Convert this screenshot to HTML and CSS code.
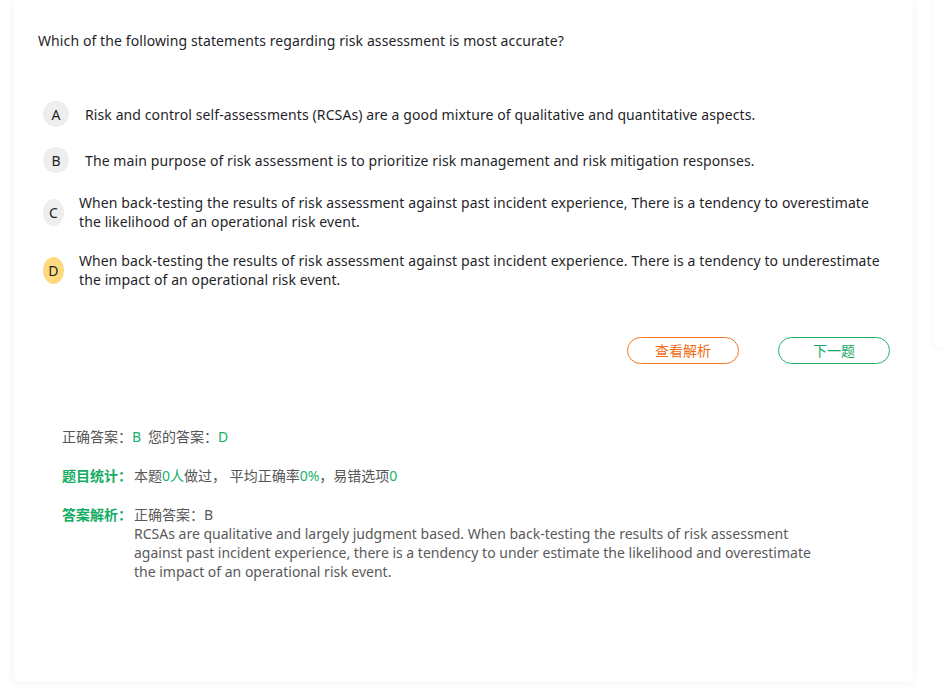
FILE: index.html
```html
<!DOCTYPE html>
<html lang="zh-CN">
<head>
<meta charset="utf-8">
<title>题目</title>
<link rel="stylesheet" href="styles.css">
</head>
<body>
<div class="page">
  <main class="card">
    <p class="question">Which of the following statements regarding risk assessment is most accurate?</p>
    <ul class="options">
      <li class="option"><span class="badge">A</span><span class="option-text">Risk and control self-assessments (RCSAs) are a good mixture of qualitative and quantitative aspects.</span></li>
      <li class="option"><span class="badge">B</span><span class="option-text">The main purpose of risk assessment is to prioritize risk management and risk mitigation responses.</span></li>
      <li class="option option-long"><span class="badge">C</span><span class="option-text">When back-testing the results of risk assessment against past incident experience, There is a tendency to overestimate the likelihood of an operational risk event.</span></li>
      <li class="option option-long"><span class="badge badge-chosen">D</span><span class="option-text">When back-testing the results of risk assessment against past incident experience. There is a tendency to underestimate the impact of an operational risk event.</span></li>
    </ul>
    <div class="actions">
      <button class="btn btn-orange">查看解析</button>
      <button class="btn btn-green">下一题</button>
    </div>
    <div class="result">
      <p class="result-line">正确答案：<span class="hl">B</span><span class="sep"></span>您的答案：<span class="hl">D</span></p>
      <p class="result-line"><span class="label">题目统计：</span>本题<span class="hl">0人</span>做过， 平均正确率<span class="hl">0%</span>，易错选项<span class="hl">0</span></p>
      <div class="analysis">
        <span class="label">答案解析：</span>
        <div class="analysis-body">
          <p>正确答案：B</p>
          <p>RCSAs are qualitative and largely judgment based. When back-testing the results of risk assessment against past incident experience, there is a tendency to under estimate the likelihood and overestimate the impact of an operational risk event.</p>
        </div>
      </div>
    </div>
  </main>
  <aside class="side-card"></aside>
</div>
</body>
</html>
```
FILE: styles.css
```css
* { box-sizing: border-box; }
html, body { margin: 0; padding: 0; background: #ffffff; }
body {
  font-family: "Noto Sans", "Noto Sans CJK SC", sans-serif;
  font-size: 14px;
  color: #1f1f2a;
  overflow: hidden;
}
p { margin: 0; }
ul { margin: 0; padding: 0; list-style: none; }

.page {
  display: flex;
  align-items: flex-start;
  gap: 21px;
  padding-left: 14px;
  width: 944px;
  height: 688px;
  overflow: hidden;
}

.card {
  flex: 0 0 899px;
  height: 682px;
  background: #fff;
  border-radius: 0 0 6px 6px;
  box-shadow: 0 1px 8px rgba(0, 0, 0, 0.06);
  padding: 31px 23px 0 24px;
}

.side-card {
  flex: 0 0 60px;
  height: 347px;
  background: #fff;
  border-radius: 0 0 0 6px;
  box-shadow: 0 1px 8px rgba(0, 0, 0, 0.05);
}

.question {
  line-height: 19px;
  letter-spacing: 0.1px;
}

.options {
  margin-top: 51px;
  padding-left: 5px;
  padding-right: 8px;
}
.option {
  display: flex;
  align-items: center;
  margin-bottom: 20px;
  line-height: 19px;
  letter-spacing: 0.1px;
}
.badge {
  flex: none;
  width: 26px;
  height: 26px;
  margin-right: 16px;
  border-radius: 50%;
  background: #eeeeee;
  display: flex;
  align-items: center;
  justify-content: center;
  color: #1f1f2a;
}
.option-long .badge { width: 21px; height: 27px; margin-right: 15px; }
.badge-chosen { background: #fdda7f; }
.option-text { flex: 1 1 auto; }

.actions {
  display: flex;
  justify-content: flex-end;
  gap: 39px;
  margin-top: 48px;
}
.btn {
  width: 112px;
  height: 27px;
  border-radius: 14px;
  background: #fff;
  font-family: "Noto Sans CJK SC", sans-serif;
  font-size: 14px;
  line-height: 25px;
  padding: 0;
  cursor: pointer;
}
.btn-orange { border: 1px solid #f5731e; color: #f26a10; }
.btn-green { border: 1px solid #1db56e; color: #14a862; }

.result {
  margin-top: 63px;
  padding-left: 24px;
  color: #555;
}
.result-line {
  line-height: 19px;
  margin-bottom: 20px;
}
.hl { color: #15b26b; }
.sep { display: inline-block; width: 7px; }
.label {
  display: inline-block;
  width: 72px;
  color: #13ad63;
  font-weight: bold;
}
.analysis {
  display: flex;
  align-items: flex-start;
  line-height: 19px;
}
.analysis .label { flex: 0 0 72px; }
.analysis-body {
  width: 700px;
  color: #5a5a5a;
}
```
